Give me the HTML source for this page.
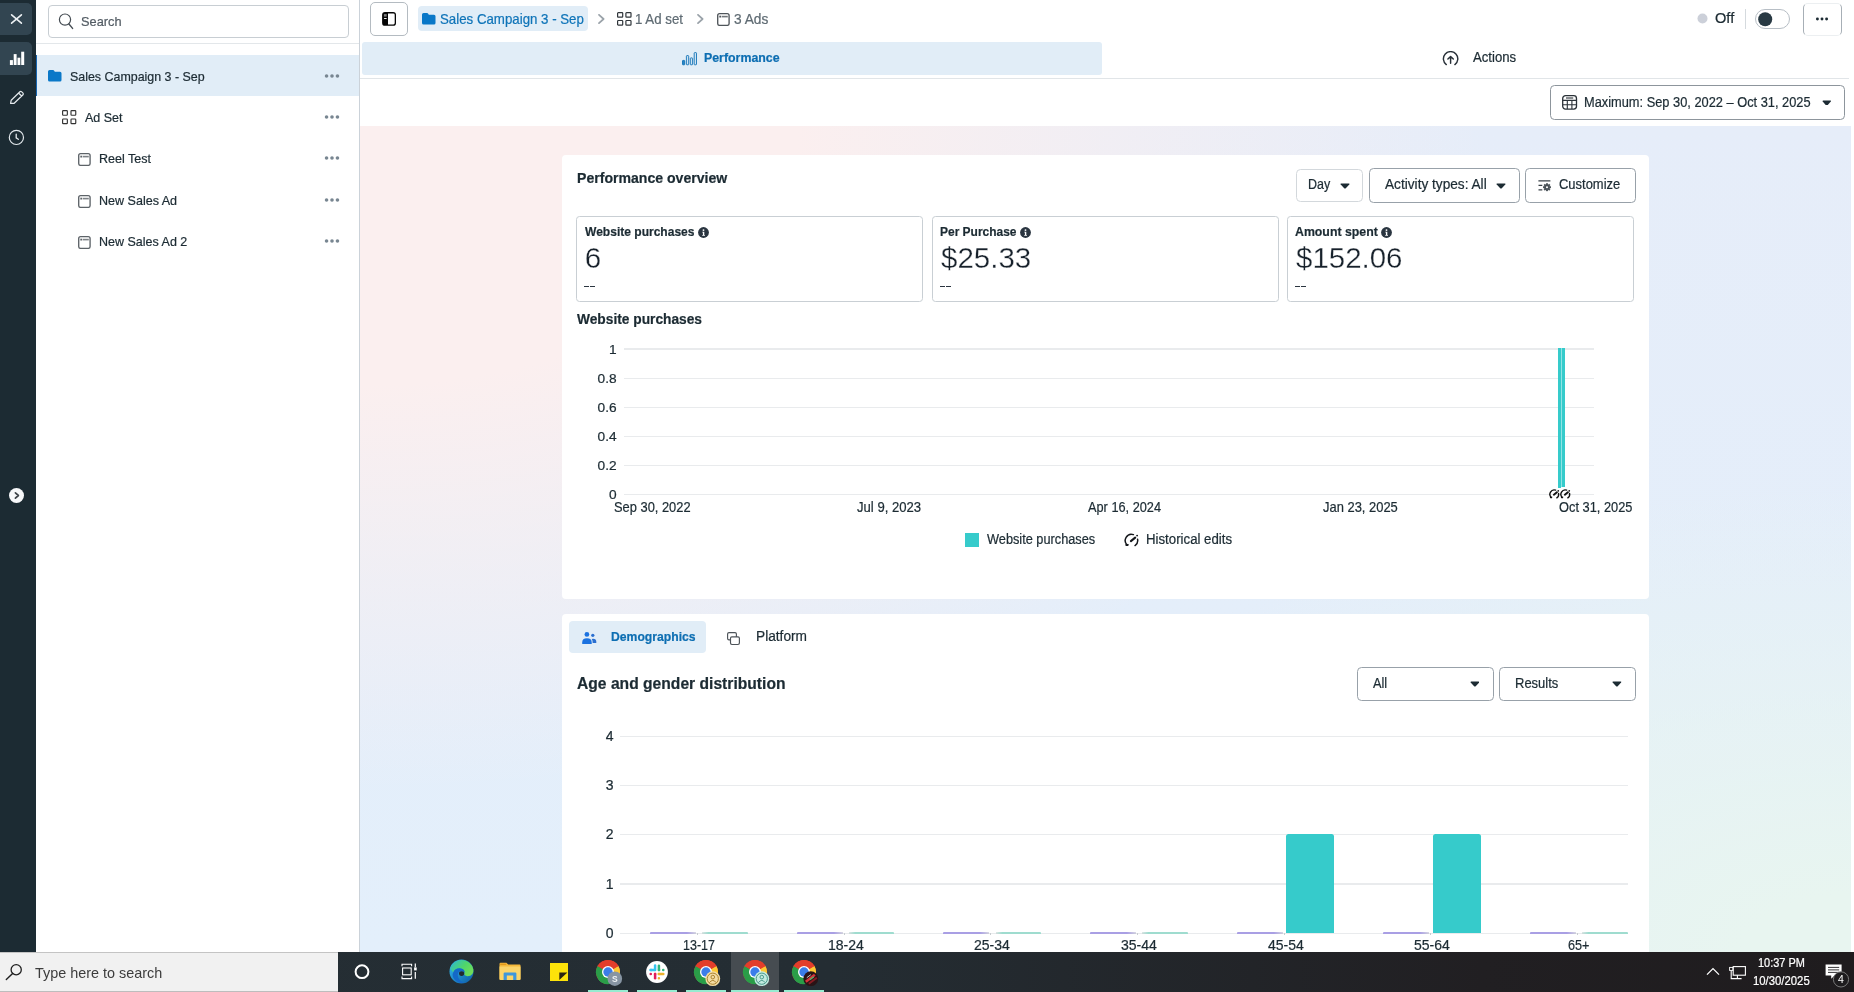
<!DOCTYPE html>
<html><head><meta charset="utf-8"><title>Ads Manager</title>
<style>
html,body{margin:0;padding:0;}
body{width:1854px;height:992px;overflow:hidden;position:relative;background:#fff;font-family:"Liberation Sans", sans-serif;color:#1c2b33;}
div,span,svg{box-sizing:border-box;}
span{-webkit-text-stroke:0.22px;}
</style></head><body>
<div id="root" style="position:absolute;left:0;top:0;width:1854px;height:992px;will-change:transform;">
<div style="position:absolute;left:360px;top:126px;width:1491px;height:826px;background:radial-gradient(ellipse 1150px 680px at 0% 0%, #fbefef 0%, #fbefef 38%, rgba(251,239,239,0.5) 66%, rgba(251,239,239,0) 98%),radial-gradient(ellipse 900px 470px at 100% 100%, #e8f5f0 0%, #e8f5f0 12%, rgba(232,245,240,0) 100%),linear-gradient(180deg,#e6edf9 0%,#e4eefa 60%,#e3effb 100%);"></div>
<div style="position:absolute;left:0px;top:0px;width:36px;height:952px;background:#1c2b33;"></div>
<div style="position:absolute;left:0px;top:3.3px;width:32.4px;height:31.5px;background:#324551;border-radius:0 5px 5px 0;"></div>
<div style="position:absolute;left:0px;top:42.4px;width:32.4px;height:32.8px;background:#324551;border-radius:0 5px 5px 0;"></div>
<svg style="position:absolute;left:10px;top:13px;" width="13" height="12" viewBox="0 0 13 12"><path d="M1.6 1.8 L11.4 10.2 M11.4 1.8 L1.6 10.2" stroke="#eef2f5" stroke-width="1.6" stroke-linecap="round"/></svg>
<svg style="position:absolute;left:9px;top:51px;" width="16" height="15" viewBox="0 0 16 15"><rect x="0.9" y="9.1" width="3" height="4.9" fill="#fff"/><rect x="4.7" y="3.1" width="2.9" height="10.9" fill="#fff"/><rect x="8.5" y="6.7" width="2.8" height="7.3" fill="#fff"/><rect x="12.2" y="0.7" width="3" height="13.3" fill="#fff"/></svg>
<svg style="position:absolute;left:9px;top:90px;" width="16" height="15" viewBox="0 0 16 15"><path d="M1.6 13.4 L2.2 10.2 L10.9 1.7 Q11.7 1 12.5 1.7 L14 3.2 Q14.7 4 14 4.8 L5.2 13.3 Z M9.6 3 L12.6 6" fill="none" stroke="#e4e9ed" stroke-width="1.2" stroke-linejoin="round"/></svg>
<svg style="position:absolute;left:8px;top:129px;" width="17" height="17" viewBox="0 0 17 17"><circle cx="8.4" cy="8.4" r="7.1" fill="none" stroke="#e4e9ed" stroke-width="1.2"/><path d="M8.2 5.2 V8.8 L10.3 10.3" fill="none" stroke="#e4e9ed" stroke-width="1.3" stroke-linecap="round"/></svg>
<svg style="position:absolute;left:7.9px;top:486.5px;" width="17" height="17" viewBox="0 0 17 17"><circle cx="8.5" cy="8.5" r="7.5" fill="#f7f8fa"/><path d="M7.4 5.8 L10.4 8.5 L7.4 11.2" fill="none" stroke="#3c4248" stroke-width="1.7" stroke-linecap="round" stroke-linejoin="round"/></svg>
<div style="position:absolute;left:36px;top:0px;width:323px;height:952px;background:#fff;"></div>
<div style="position:absolute;left:359px;top:0px;width:1px;height:952px;background:#cbd2d9;"></div>
<div style="position:absolute;left:48px;top:5px;width:301px;height:33px;border:1px solid #c8ced3;border-radius:4px;background:#fff;"></div>
<svg style="position:absolute;left:58px;top:12px;" width="16" height="18" viewBox="0 0 16 18"><circle cx="7" cy="7.6" r="5.6" fill="none" stroke="#444b52" stroke-width="1.2"/><path d="M10.9 12 L14.6 16.4" stroke="#444b52" stroke-width="1.4" stroke-linecap="round"/></svg>
<span style="position:absolute;left:80.60px;top:12.00px;line-height:20px;font-size:13.4px;font-weight:400;color:#535c64;white-space:pre;transform:scaleX(0.9543);transform-origin:0 50%;">Search</span>
<div style="position:absolute;left:36px;top:43px;width:323px;height:1px;background:#e3e7ea;"></div>
<div style="position:absolute;left:36px;top:55px;width:323px;height:41px;background:#e1edf7;"></div>
<div style="position:absolute;left:36px;top:55px;width:1.3px;height:41px;background:#1765b0;"></div>
<svg style="position:absolute;left:48.4px;top:70.4px;" width="14" height="12" viewBox="0 0 14 12"><path d="M1.6 0 H5 Q5.8 0 6.2 .7 L6.8 1.7 H12 Q13.5 1.7 13.5 3.2 V9.9 Q13.5 11.4 12 11.4 H1.6 Q0 11.4 0 9.9 V1.5 Q0 0 1.6 0Z" fill="#0a78c8"/></svg>
<span style="position:absolute;left:69.70px;top:67.01px;line-height:20px;font-size:13.4px;font-weight:400;color:#1c2b33;white-space:pre;transform:scaleX(0.9273);transform-origin:0 50%;">Sales Campaign 3 - Sep</span>
<svg style="position:absolute;left:62px;top:110.2px;" width="15" height="14.5" viewBox="0 0 15 14.5"><rect x="0.6" y="0.6" width="4.75" height="4.6" rx="0.7" fill="none" stroke="#333" stroke-width="1.15"/><rect x="0.6" y="9.0" width="4.75" height="4.6" rx="0.7" fill="none" stroke="#333" stroke-width="1.15"/><rect x="9.0" y="0.6" width="4.75" height="4.6" rx="0.7" fill="none" stroke="#333" stroke-width="1.15"/><rect x="9.0" y="9.0" width="4.75" height="4.6" rx="0.7" fill="none" stroke="#333" stroke-width="1.15"/></svg>
<span style="position:absolute;left:84.80px;top:108.01px;line-height:20px;font-size:13.4px;font-weight:400;color:#1c2b33;white-space:pre;transform:scaleX(0.9328);transform-origin:0 50%;">Ad Set</span>
<svg style="position:absolute;left:77.7px;top:152.70000000000002px;" width="13" height="13.2" viewBox="0 0 13 13.2"><rect x="0.7" y="0.7" width="11.4" height="11.7" rx="1.9" fill="none" stroke="#5d6368" stroke-width="1.35"/><rect x="2.3" y="2.7" width="2" height="1.8" fill="#5d6368"/><rect x="5" y="2.8" width="5.8" height="1.6" fill="#5d6368" opacity=".8"/></svg>
<span style="position:absolute;left:98.90px;top:149.01px;line-height:20px;font-size:13.4px;font-weight:400;color:#1c2b33;white-space:pre;transform:scaleX(0.9356);transform-origin:0 50%;">Reel Test</span>
<svg style="position:absolute;left:77.7px;top:194.70000000000002px;" width="13" height="13.2" viewBox="0 0 13 13.2"><rect x="0.7" y="0.7" width="11.4" height="11.7" rx="1.9" fill="none" stroke="#5d6368" stroke-width="1.35"/><rect x="2.3" y="2.7" width="2" height="1.8" fill="#5d6368"/><rect x="5" y="2.8" width="5.8" height="1.6" fill="#5d6368" opacity=".8"/></svg>
<span style="position:absolute;left:98.90px;top:191.01px;line-height:20px;font-size:13.4px;font-weight:400;color:#1c2b33;white-space:pre;transform:scaleX(0.9367);transform-origin:0 50%;">New Sales Ad</span>
<svg style="position:absolute;left:77.7px;top:235.9px;" width="13" height="13.2" viewBox="0 0 13 13.2"><rect x="0.7" y="0.7" width="11.4" height="11.7" rx="1.9" fill="none" stroke="#5d6368" stroke-width="1.35"/><rect x="2.3" y="2.7" width="2" height="1.8" fill="#5d6368"/><rect x="5" y="2.8" width="5.8" height="1.6" fill="#5d6368" opacity=".8"/></svg>
<span style="position:absolute;left:98.90px;top:232.00px;line-height:20px;font-size:13.4px;font-weight:400;color:#1c2b33;white-space:pre;transform:scaleX(0.9339);transform-origin:0 50%;">New Sales Ad 2</span>
<svg style="position:absolute;left:322px;top:72px;" width="20" height="8" viewBox="0 0 20 8"><circle cx="4.55" cy="4" r="1.8" fill="#788691"/><circle cx="10.0" cy="4" r="1.8" fill="#788691"/><circle cx="15.45" cy="4" r="1.8" fill="#788691"/></svg>
<svg style="position:absolute;left:322px;top:113px;" width="20" height="8" viewBox="0 0 20 8"><circle cx="4.55" cy="4" r="1.8" fill="#788691"/><circle cx="10.0" cy="4" r="1.8" fill="#788691"/><circle cx="15.45" cy="4" r="1.8" fill="#788691"/></svg>
<svg style="position:absolute;left:322px;top:154.2px;" width="20" height="8" viewBox="0 0 20 8"><circle cx="4.55" cy="4" r="1.8" fill="#788691"/><circle cx="10.0" cy="4" r="1.8" fill="#788691"/><circle cx="15.45" cy="4" r="1.8" fill="#788691"/></svg>
<svg style="position:absolute;left:322px;top:196px;" width="20" height="8" viewBox="0 0 20 8"><circle cx="4.55" cy="4" r="1.8" fill="#788691"/><circle cx="10.0" cy="4" r="1.8" fill="#788691"/><circle cx="15.45" cy="4" r="1.8" fill="#788691"/></svg>
<svg style="position:absolute;left:322px;top:237.3px;" width="20" height="8" viewBox="0 0 20 8"><circle cx="4.55" cy="4" r="1.8" fill="#788691"/><circle cx="10.0" cy="4" r="1.8" fill="#788691"/><circle cx="15.45" cy="4" r="1.8" fill="#788691"/></svg>
<div style="position:absolute;left:360px;top:0px;width:1494px;height:126px;background:#fff;"></div>
<div style="position:absolute;left:370px;top:2px;width:38px;height:34px;border:1px solid #b4bbc1;border-radius:5px;background:#fff;"></div>
<svg style="position:absolute;left:382px;top:12px;" width="15" height="14" viewBox="0 0 15 14"><rect x="0.1" y="0.1" width="13.9" height="13.7" rx="2.9" fill="#050505"/><path d="M6.0 1.4 H11.4 Q12.7 1.4 12.7 2.8 V11.1 Q12.7 12.5 11.4 12.5 H6.0Z" fill="#fff"/><rect x="1.9" y="2.1" width="2.8" height="2.5" fill="#7e7e7e"/><rect x="1.9" y="6" width="2.9" height="1" rx="0.4" fill="#f4f4f4"/></svg>
<div style="position:absolute;left:418px;top:6.3px;width:170px;height:24.4px;background:#e1edf7;border-radius:4px;"></div>
<svg style="position:absolute;left:421.7px;top:13.2px;" width="14" height="12" viewBox="0 0 14 12"><path d="M1.6 0 H5 Q5.8 0 6.2 .7 L6.8 1.7 H12 Q13.5 1.7 13.5 3.2 V9.9 Q13.5 11.4 12 11.4 H1.6 Q0 11.4 0 9.9 V1.5 Q0 0 1.6 0Z" fill="#0a78c8"/></svg>
<span style="position:absolute;left:440.00px;top:9.00px;line-height:20px;font-size:14.2px;font-weight:400;color:#0f74b8;white-space:pre;transform:scaleX(0.9356);transform-origin:0 50%;">Sales Campaign 3 - Sep</span>
<svg style="position:absolute;left:597.6px;top:13.6px;" width="7" height="10" viewBox="0 0 7 10"><path d="M1 0.8 L5.6 5 L1 9.2" fill="none" stroke="#9aa2a9" stroke-width="1.7" stroke-linecap="round" stroke-linejoin="round"/></svg>
<svg style="position:absolute;left:616.7px;top:12.1px;" width="15" height="14.5" viewBox="0 0 15 14.5"><rect x="0.6" y="0.6" width="5.1" height="4.6" rx="0.7" fill="none" stroke="#30363b" stroke-width="1.2"/><rect x="0.6" y="8.5" width="5.1" height="4.6" rx="0.7" fill="none" stroke="#30363b" stroke-width="1.2"/><rect x="8.9" y="0.6" width="5.1" height="4.6" rx="0.7" fill="none" stroke="#30363b" stroke-width="1.2"/><rect x="8.9" y="8.5" width="5.1" height="4.6" rx="0.7" fill="none" stroke="#30363b" stroke-width="1.2"/></svg>
<span style="position:absolute;left:635.00px;top:9.00px;line-height:20px;font-size:14.2px;font-weight:400;color:#5f6b73;white-space:pre;transform:scaleX(0.9360);transform-origin:0 50%;">1 Ad set</span>
<svg style="position:absolute;left:696.6px;top:13.6px;" width="7" height="10" viewBox="0 0 7 10"><path d="M1 0.8 L5.6 5 L1 9.2" fill="none" stroke="#9aa2a9" stroke-width="1.7" stroke-linecap="round" stroke-linejoin="round"/></svg>
<svg style="position:absolute;left:716.8px;top:12.9px;" width="13" height="13.2" viewBox="0 0 13 13.2"><rect x="0.7" y="0.7" width="11.4" height="11.7" rx="1.9" fill="none" stroke="#4f555a" stroke-width="1.35"/><rect x="2.3" y="2.7" width="2" height="1.8" fill="#4f555a"/><rect x="5" y="2.8" width="5.8" height="1.6" fill="#4f555a" opacity=".8"/></svg>
<span style="position:absolute;left:733.80px;top:9.00px;line-height:20px;font-size:14.2px;font-weight:400;color:#5f6b73;white-space:pre;transform:scaleX(0.9662);transform-origin:0 50%;">3 Ads</span>
<svg style="position:absolute;left:1696.5px;top:13.3px;" width="11" height="11" viewBox="0 0 11 11"><circle cx="5.5" cy="5.5" r="5" fill="#ccd0d9"/></svg>
<span style="position:absolute;left:1714.90px;top:8.00px;line-height:20px;font-size:14px;font-weight:400;color:#1c2b33;white-space:pre;transform:scaleX(1.0422);transform-origin:0 50%;">Off</span>
<div style="position:absolute;left:1745px;top:8.5px;width:1px;height:20.5px;background:#d5dade;"></div>
<div style="position:absolute;left:1755px;top:9px;width:34.5px;height:19.5px;border:1px solid #b7bec5;border-radius:10px;background:#fff;"></div>
<svg style="position:absolute;left:1757.8px;top:11.7px;" width="15" height="15" viewBox="0 0 15 15"><circle cx="7.2" cy="7.2" r="7" fill="#283943"/></svg>
<div style="position:absolute;left:1803px;top:2.5px;width:38.5px;height:33px;border-left:1px solid #a7afb6;border-right:1px solid #a7afb6;border-top:1px solid #eceff1;border-bottom:1px solid #eceff1;border-radius:5px;"></div>
<svg style="position:absolute;left:1812px;top:14.8px;" width="20" height="8" viewBox="0 0 20 8"><circle cx="5.4" cy="4" r="1.45" fill="#1c2b33"/><circle cx="10.0" cy="4" r="1.45" fill="#1c2b33"/><circle cx="14.6" cy="4" r="1.45" fill="#1c2b33"/></svg>
<div style="position:absolute;left:361.6px;top:42.2px;width:740px;height:32.7px;background:#e1edf7;border-radius:3px;"></div>
<svg style="position:absolute;left:682px;top:51.5px;" width="15.5" height="14" viewBox="0 0 15.5 14"><rect x="0.5" y="8.4" width="2.2" height="4.4" rx="0.5" fill="#2a86c5" stroke="#1273b7" stroke-width="0.9"/><rect x="4.4" y="3.6" width="2.3" height="9.2" rx="0.6" fill="#cfe3f3" stroke="#1273b7" stroke-width="0.9"/><rect x="8.3" y="5.9" width="2.3" height="6.9" rx="0.6" fill="#cfe3f3" stroke="#1273b7" stroke-width="0.9"/><rect x="12.2" y="0.6" width="2.3" height="12.2" rx="0.6" fill="#cfe3f3" stroke="#1273b7" stroke-width="0.9"/></svg>
<span style="position:absolute;left:704.30px;top:48.01px;line-height:20px;font-size:13.4px;font-weight:700;color:#0d6eb2;white-space:pre;transform:scaleX(0.9234);transform-origin:0 50%;">Performance</span>
<svg style="position:absolute;left:1442px;top:51.2px;" width="18" height="16" viewBox="0 0 18 16"><path d="M4.3 13.6 A7.2 7.2 0 1 1 12.9 13.6" fill="none" stroke="#283038" stroke-width="1.45" stroke-linecap="round"/><path d="M8.6 12.3 V5.6 M5.9 8.1 L8.6 5.4 L11.3 8.1" fill="none" stroke="#283038" stroke-width="1.45" stroke-linecap="round" stroke-linejoin="round"/></svg>
<span style="position:absolute;left:1473.00px;top:47.01px;line-height:20px;font-size:14px;font-weight:400;color:#1c2b33;white-space:pre;transform:scaleX(0.9407);transform-origin:0 50%;">Actions</span>
<div style="position:absolute;left:360px;top:77.9px;width:1489px;height:1px;background:#e1e5e8;"></div>
<div style="position:absolute;left:1550px;top:85px;width:295px;height:35px;border:1px solid #8d959c;border-radius:4.5px;background:#fff;"></div>
<svg style="position:absolute;left:1562px;top:95px;" width="15.5" height="15" viewBox="0 0 15.5 15"><rect x="0.7" y="0.7" width="13.8" height="13.4" rx="2.8" fill="none" stroke="#2b3238" stroke-width="1.3"/><path d="M0.7 5.4 H14.5 M0.7 9.7 H14.5 M5.3 5.4 V14.1 M9.9 5.4 V14.1" stroke="#2b3238" stroke-width="1.1" fill="none"/><path d="M4 3 H11.2" stroke="#2b3238" stroke-width="1.1"/></svg>
<span style="position:absolute;left:1584.40px;top:92.01px;line-height:20px;font-size:14px;font-weight:400;color:#1c2b33;white-space:pre;transform:scaleX(0.9156);transform-origin:0 50%;">Maximum: Sep 30, 2022 – Oct 31, 2025</span>
<svg style="position:absolute;left:1821.5px;top:99.7px;" width="9.5" height="5.8" viewBox="0 0 9.5 5.8"><path d="M1.2 0.6 H8.3 Q9.5 0.6 8.8 1.6 L5.55 5.3 Q4.75 5.8999999999999995 3.95 5.3 L0.7 1.6 Q0 0.6 1.2 0.6Z" fill="#1c2b33"/></svg>
<div style="position:absolute;left:562px;top:154.6px;width:1087px;height:444px;background:#fff;border-radius:4px;"></div>
<span style="position:absolute;left:577.20px;top:168.01px;line-height:20px;font-size:14px;font-weight:700;color:#1c2b33;white-space:pre;transform:scaleX(1.0053);transform-origin:0 50%;">Performance overview</span>
<div style="position:absolute;left:1296.2px;top:169.1px;width:66.6px;height:32.7px;border:1px solid #d3d8dc;border-radius:4.5px;background:#fff;"></div>
<span style="position:absolute;left:1308.00px;top:174.01px;line-height:20px;font-size:14px;font-weight:400;color:#1c2b33;white-space:pre;transform:scaleX(0.8913);transform-origin:0 50%;">Day</span>
<svg style="position:absolute;left:1339.6px;top:183px;" width="10" height="5.8" viewBox="0 0 10 5.8"><path d="M1.2 0.6 H8.8 Q10 0.6 9.3 1.6 L5.8 5.3 Q5.0 5.8999999999999995 4.2 5.3 L0.7 1.6 Q0 0.6 1.2 0.6Z" fill="#1c2b33"/></svg>
<div style="position:absolute;left:1369.2px;top:168.2px;width:150.5px;height:34.5px;border:1px solid #98a1a9;border-radius:4.5px;background:#fff;"></div>
<span style="position:absolute;left:1384.80px;top:174.01px;line-height:20px;font-size:14px;font-weight:400;color:#1c2b33;white-space:pre;transform:scaleX(0.9754);transform-origin:0 50%;">Activity types: All</span>
<svg style="position:absolute;left:1495.8px;top:183px;" width="10" height="5.8" viewBox="0 0 10 5.8"><path d="M1.2 0.6 H8.8 Q10 0.6 9.3 1.6 L5.8 5.3 Q5.0 5.8999999999999995 4.2 5.3 L0.7 1.6 Q0 0.6 1.2 0.6Z" fill="#1c2b33"/></svg>
<div style="position:absolute;left:1525px;top:168.2px;width:110.6px;height:34.5px;border:1px solid #98a1a9;border-radius:4.5px;background:#fff;"></div>
<svg style="position:absolute;left:1537.5px;top:179.0px;" width="15" height="13" viewBox="0 0 15 13"><path d="M0.4 1.9 H12.4 M0.5 6.4 H4.3 M0.5 10.9 H4.3" stroke="#3a4248" stroke-width="1.2" fill="none"/><g transform="translate(9.0,8.2)"><circle r="2.75" fill="#4a5258"/><rect x="-0.95" y="-3.95" width="1.9" height="1.9" fill="#4a5258" transform="rotate(0)"/><rect x="-0.95" y="-3.95" width="1.9" height="1.9" fill="#4a5258" transform="rotate(45)"/><rect x="-0.95" y="-3.95" width="1.9" height="1.9" fill="#4a5258" transform="rotate(90)"/><rect x="-0.95" y="-3.95" width="1.9" height="1.9" fill="#4a5258" transform="rotate(135)"/><rect x="-0.95" y="-3.95" width="1.9" height="1.9" fill="#4a5258" transform="rotate(180)"/><rect x="-0.95" y="-3.95" width="1.9" height="1.9" fill="#4a5258" transform="rotate(225)"/><rect x="-0.95" y="-3.95" width="1.9" height="1.9" fill="#4a5258" transform="rotate(270)"/><rect x="-0.95" y="-3.95" width="1.9" height="1.9" fill="#4a5258" transform="rotate(315)"/><circle r="1.05" fill="#fff"/></g></svg>
<span style="position:absolute;left:1558.90px;top:174.01px;line-height:20px;font-size:14px;font-weight:400;color:#1c2b33;white-space:pre;transform:scaleX(0.9253);transform-origin:0 50%;">Customize</span>
<div style="position:absolute;left:576.3px;top:216.3px;width:347px;height:85.6px;border:1px solid #c9cfd4;border-radius:3.5px;background:#fff;"></div><span style="position:absolute;left:584.50px;top:222.01px;line-height:20px;font-size:13.6px;font-weight:700;color:#1c2b33;white-space:pre;transform:scaleX(0.8855);transform-origin:0 50%;">Website purchases</span><svg style="position:absolute;left:698.0px;top:226.85px;" width="11" height="11" viewBox="0 0 11 11"><circle cx="5.5" cy="5.5" r="5.4" fill="#2a3540"/><circle cx="5.5" cy="3.1" r="0.95" fill="#fff"/><path d="M4.3 4.8 H6.3 V8 H7 V8.8 H4.2 V8 H4.9 V5.6 H4.3Z" fill="#fff"/></svg><span style="position:absolute;left:584.70px;top:248.01px;line-height:20px;font-size:29.6px;font-weight:400;color:#17212b;white-space:pre;-webkit-text-stroke:0.3px #fff;">6</span><div style="position:absolute;left:583.5999999999999px;top:285.8px;width:5.1px;height:1.2px;background:#2b3540;"></div><div style="position:absolute;left:589.5999999999999px;top:285.8px;width:5.1px;height:1.2px;background:#2b3540;"></div>
<div style="position:absolute;left:932.2px;top:216.3px;width:347px;height:85.6px;border:1px solid #c9cfd4;border-radius:3.5px;background:#fff;"></div><span style="position:absolute;left:940.40px;top:222.01px;line-height:20px;font-size:13.6px;font-weight:700;color:#1c2b33;white-space:pre;transform:scaleX(0.8800);transform-origin:0 50%;">Per Purchase</span><svg style="position:absolute;left:1019.9000000000001px;top:226.85px;" width="11" height="11" viewBox="0 0 11 11"><circle cx="5.5" cy="5.5" r="5.4" fill="#2a3540"/><circle cx="5.5" cy="3.1" r="0.95" fill="#fff"/><path d="M4.3 4.8 H6.3 V8 H7 V8.8 H4.2 V8 H4.9 V5.6 H4.3Z" fill="#fff"/></svg><span style="position:absolute;left:940.60px;top:248.01px;line-height:20px;font-size:29.6px;font-weight:400;color:#17212b;white-space:pre;transform:scaleX(0.9965);transform-origin:0 50%;-webkit-text-stroke:0.3px #fff;">$25.33</span><div style="position:absolute;left:939.5px;top:285.8px;width:5.1px;height:1.2px;background:#2b3540;"></div><div style="position:absolute;left:945.5px;top:285.8px;width:5.1px;height:1.2px;background:#2b3540;"></div>
<div style="position:absolute;left:1287.2px;top:216.3px;width:347.3px;height:85.6px;border:1px solid #c9cfd4;border-radius:3.5px;background:#fff;"></div><span style="position:absolute;left:1295.40px;top:222.01px;line-height:20px;font-size:13.6px;font-weight:700;color:#1c2b33;white-space:pre;transform:scaleX(0.9062);transform-origin:0 50%;">Amount spent</span><svg style="position:absolute;left:1380.9px;top:226.85px;" width="11" height="11" viewBox="0 0 11 11"><circle cx="5.5" cy="5.5" r="5.4" fill="#2a3540"/><circle cx="5.5" cy="3.1" r="0.95" fill="#fff"/><path d="M4.3 4.8 H6.3 V8 H7 V8.8 H4.2 V8 H4.9 V5.6 H4.3Z" fill="#fff"/></svg><span style="position:absolute;left:1295.60px;top:248.01px;line-height:20px;font-size:29.6px;font-weight:400;color:#17212b;white-space:pre;transform:scaleX(0.9955);transform-origin:0 50%;-webkit-text-stroke:0.3px #fff;">$152.06</span><div style="position:absolute;left:1294.5px;top:285.8px;width:5.1px;height:1.2px;background:#2b3540;"></div><div style="position:absolute;left:1300.5px;top:285.8px;width:5.1px;height:1.2px;background:#2b3540;"></div>
<span style="position:absolute;left:577.40px;top:309.01px;line-height:20px;font-size:14.5px;font-weight:700;color:#1c2b33;white-space:pre;transform:scaleX(0.9476);transform-origin:0 50%;">Website purchases</span>
<div style="position:absolute;left:624.2px;top:348.4px;width:970.3px;height:1.3px;background:#e9ebed;"></div>
<span style="position:absolute;left:608.98px;top:340.01px;line-height:20px;font-size:13.7px;font-weight:400;color:#1c2b33;white-space:pre;">1</span>
<div style="position:absolute;left:624.2px;top:377.5px;width:970.3px;height:1.3px;background:#e9ebed;"></div>
<span style="position:absolute;left:597.57px;top:369.02px;line-height:20px;font-size:13.7px;font-weight:400;color:#1c2b33;white-space:pre;">0.8</span>
<div style="position:absolute;left:624.2px;top:406.59999999999997px;width:970.3px;height:1.3px;background:#e9ebed;"></div>
<span style="position:absolute;left:597.57px;top:398.01px;line-height:20px;font-size:13.7px;font-weight:400;color:#1c2b33;white-space:pre;">0.6</span>
<div style="position:absolute;left:624.2px;top:435.7px;width:970.3px;height:1.3px;background:#e9ebed;"></div>
<span style="position:absolute;left:597.57px;top:427.01px;line-height:20px;font-size:13.7px;font-weight:400;color:#1c2b33;white-space:pre;">0.4</span>
<div style="position:absolute;left:624.2px;top:464.79999999999995px;width:970.3px;height:1.3px;background:#e9ebed;"></div>
<span style="position:absolute;left:597.57px;top:456.00px;line-height:20px;font-size:13.7px;font-weight:400;color:#1c2b33;white-space:pre;">0.2</span>
<div style="position:absolute;left:624.2px;top:493.79999999999995px;width:970.3px;height:1.3px;background:#e9ebed;"></div>
<span style="position:absolute;left:608.98px;top:485.00px;line-height:20px;font-size:13.7px;font-weight:400;color:#1c2b33;white-space:pre;">0</span>
<div style="position:absolute;left:1557.5px;top:348.3px;width:3.6px;height:139.8px;background:#36cbcb;"></div>
<div style="position:absolute;left:1561.8px;top:348.3px;width:3.3px;height:138.6px;background:#36cbcb;"></div>
<div style="position:absolute;left:1561.0px;top:348.3px;width:0.9px;height:138.6px;background:#8fe4e4;"></div>
<span style="position:absolute;left:614.40px;top:497.00px;line-height:20px;font-size:14.3px;font-weight:400;color:#1c2b33;white-space:pre;transform:scaleX(0.9005);transform-origin:0 50%;">Sep 30, 2022</span>
<span style="position:absolute;left:856.65px;top:497.00px;line-height:20px;font-size:14.3px;font-weight:400;color:#1c2b33;white-space:pre;transform:scaleX(0.9163);transform-origin:0 50%;">Jul 9, 2023</span>
<span style="position:absolute;left:1088.00px;top:497.00px;line-height:20px;font-size:14.3px;font-weight:400;color:#1c2b33;white-space:pre;transform:scaleX(0.8916);transform-origin:0 50%;">Apr 16, 2024</span>
<span style="position:absolute;left:1322.90px;top:497.00px;line-height:20px;font-size:14.3px;font-weight:400;color:#1c2b33;white-space:pre;transform:scaleX(0.9046);transform-origin:0 50%;">Jan 23, 2025</span>
<span style="position:absolute;left:1558.50px;top:497.00px;line-height:20px;font-size:14.3px;font-weight:400;color:#1c2b33;white-space:pre;transform:scaleX(0.8965);transform-origin:0 50%;">Oct 31, 2025</span>
<svg style="position:absolute;left:1549.4px;top:489.2px;" width="10.6" height="10.6" viewBox="0 0 15 15"><path d="M9.42 1.60 A6.2 6.2 0 0 0 3.35 12.11" fill="none" stroke="#111" stroke-width="1.9500000000000002" stroke-linecap="round"/><path d="M13.56 6.21 A6.2 6.2 0 0 1 11.06 12.58" fill="none" stroke="#111" stroke-width="1.9500000000000002" stroke-linecap="round"/><path d="M1.14 11.21 L4.74 10.91 L4.24 12.91 L1.74 13.01Z" fill="#111"/><path d="M6.9 8.1 L11.2 4.6" stroke="#111" stroke-width="2.7300000000000004" stroke-linecap="round"/><circle cx="13.1" cy="2.6" r="1.2349999999999999" fill="#111"/></svg>
<svg style="position:absolute;left:1560px;top:489.2px;" width="10.6" height="10.6" viewBox="0 0 15 15"><path d="M9.42 1.60 A6.2 6.2 0 0 0 3.35 12.11" fill="none" stroke="#111" stroke-width="1.9500000000000002" stroke-linecap="round"/><path d="M13.56 6.21 A6.2 6.2 0 0 1 11.06 12.58" fill="none" stroke="#111" stroke-width="1.9500000000000002" stroke-linecap="round"/><path d="M1.14 11.21 L4.74 10.91 L4.24 12.91 L1.74 13.01Z" fill="#111"/><path d="M6.9 8.1 L11.2 4.6" stroke="#111" stroke-width="2.7300000000000004" stroke-linecap="round"/><circle cx="13.1" cy="2.6" r="1.2349999999999999" fill="#111"/></svg>
<div style="position:absolute;left:965.1px;top:533.2px;width:13.8px;height:13.7px;background:#36cbcb;"></div>
<span style="position:absolute;left:987.20px;top:529.01px;line-height:20px;font-size:14px;font-weight:400;color:#1c2b33;white-space:pre;transform:scaleX(0.9107);transform-origin:0 50%;">Website purchases</span>
<svg style="position:absolute;left:1123.5px;top:532.6px;" width="15" height="15" viewBox="0 0 15 15"><path d="M9.42 1.60 A6.2 6.2 0 0 0 3.35 12.11" fill="none" stroke="#14171b" stroke-width="1.5" stroke-linecap="round"/><path d="M13.56 6.21 A6.2 6.2 0 0 1 11.06 12.58" fill="none" stroke="#14171b" stroke-width="1.5" stroke-linecap="round"/><path d="M1.14 11.21 L4.74 10.91 L4.24 12.91 L1.74 13.01Z" fill="#14171b"/><path d="M6.9 8.1 L11.2 4.6" stroke="#14171b" stroke-width="2.1" stroke-linecap="round"/><circle cx="13.1" cy="2.6" r="0.95" fill="#14171b"/></svg>
<span style="position:absolute;left:1146.10px;top:529.01px;line-height:20px;font-size:14px;font-weight:400;color:#1c2b33;white-space:pre;transform:scaleX(0.9458);transform-origin:0 50%;">Historical edits</span>
<div style="position:absolute;left:562px;top:614px;width:1087px;height:338px;background:#fff;border-radius:4px 4px 0 0;"></div>
<div style="position:absolute;left:569.4px;top:621.3px;width:136.4px;height:31.3px;background:#e1edf7;border-radius:4px;"></div>
<svg style="position:absolute;left:581.8px;top:632px;" width="15" height="12.5" viewBox="0 0 15 12.5"><circle cx="4.9" cy="2.4" r="2.35" fill="#1b72e0"/><path d="M0.2 12 V10.4 Q0.2 6.3 4.95 6.3 Q9.7 6.3 9.7 10.4 V12Z" fill="#1b72e0"/><circle cx="10.8" cy="3.3" r="1.65" fill="#2a6fd0"/><path d="M10.6 11 V9.9 Q10.6 8 9.7 6.9 Q14.3 6.1 14.3 9.8 V11Z" fill="#2a6fd0"/></svg>
<span style="position:absolute;left:611.40px;top:627.00px;line-height:20px;font-size:13.6px;font-weight:700;color:#0d6eb2;white-space:pre;transform:scaleX(0.8958);transform-origin:0 50%;">Demographics</span>
<svg style="position:absolute;left:726.8px;top:632px;" width="14" height="13.5" viewBox="0 0 14 13.5"><rect x="0.6" y="0.6" width="8.8" height="7.2" rx="1.4" fill="#fff" stroke="#4d5359" stroke-width="1.15"/><rect x="3.5" y="4.9" width="8.9" height="7.6" rx="1.4" fill="#fff" stroke="#4d5359" stroke-width="1.15"/></svg>
<span style="position:absolute;left:756.40px;top:626.00px;line-height:20px;font-size:14px;font-weight:400;color:#1c2b33;white-space:pre;transform:scaleX(0.9784);transform-origin:0 50%;">Platform</span>
<span style="position:absolute;left:576.90px;top:673.01px;line-height:20px;font-size:16.2px;font-weight:700;color:#1c2b33;white-space:pre;transform:scaleX(0.9660);transform-origin:0 50%;">Age and gender distribution</span>
<div style="position:absolute;left:1357.2px;top:667.4px;width:136.4px;height:33.3px;border:1px solid #98a1a9;border-radius:4.5px;background:#fff;"></div>
<span style="position:absolute;left:1372.80px;top:673.00px;line-height:20px;font-size:14px;font-weight:400;color:#1c2b33;white-space:pre;transform:scaleX(0.9124);transform-origin:0 50%;">All</span>
<svg style="position:absolute;left:1469.7px;top:681px;" width="9.8" height="5.8" viewBox="0 0 9.8 5.8"><path d="M1.2 0.6 H8.600000000000001 Q9.8 0.6 9.100000000000001 1.6 L5.7 5.3 Q4.9 5.8999999999999995 4.1000000000000005 5.3 L0.7 1.6 Q0 0.6 1.2 0.6Z" fill="#1c2b33"/></svg>
<div style="position:absolute;left:1499.1px;top:667.4px;width:136.7px;height:33.3px;border:1px solid #98a1a9;border-radius:4.5px;background:#fff;"></div>
<span style="position:absolute;left:1514.70px;top:673.00px;line-height:20px;font-size:14px;font-weight:400;color:#1c2b33;white-space:pre;transform:scaleX(0.9274);transform-origin:0 50%;">Results</span>
<svg style="position:absolute;left:1612.1px;top:681px;" width="9.8" height="5.8" viewBox="0 0 9.8 5.8"><path d="M1.2 0.6 H8.600000000000001 Q9.8 0.6 9.100000000000001 1.6 L5.7 5.3 Q4.9 5.8999999999999995 4.1000000000000005 5.3 L0.7 1.6 Q0 0.6 1.2 0.6Z" fill="#1c2b33"/></svg>
<div style="position:absolute;left:620.3px;top:735.6px;width:1007.6px;height:1.2px;background:#e9ebed;"></div>
<span style="position:absolute;left:605.80px;top:726.00px;line-height:20px;font-size:14px;font-weight:400;color:#1c2b33;white-space:pre;">4</span>
<div style="position:absolute;left:620.3px;top:784.9px;width:1007.6px;height:1.2px;background:#e9ebed;"></div>
<span style="position:absolute;left:605.80px;top:775.01px;line-height:20px;font-size:14px;font-weight:400;color:#1c2b33;white-space:pre;">3</span>
<div style="position:absolute;left:620.3px;top:834.1px;width:1007.6px;height:1.2px;background:#e9ebed;"></div>
<span style="position:absolute;left:605.80px;top:824.00px;line-height:20px;font-size:14px;font-weight:400;color:#1c2b33;white-space:pre;">2</span>
<div style="position:absolute;left:620.3px;top:883.4px;width:1007.6px;height:1.2px;background:#e9ebed;"></div>
<span style="position:absolute;left:605.80px;top:874.01px;line-height:20px;font-size:14px;font-weight:400;color:#1c2b33;white-space:pre;">1</span>
<div style="position:absolute;left:620.3px;top:932.6999999999999px;width:1007.6px;height:1.2px;background:#e9ebed;"></div>
<span style="position:absolute;left:605.80px;top:923.01px;line-height:20px;font-size:14px;font-weight:400;color:#1c2b33;white-space:pre;">0</span>
<div style="position:absolute;left:649.8000000000001px;top:931.9px;width:46px;height:1.9px;background:linear-gradient(90deg,#a99fe4 0%,#a99fe4 80%,rgba(180,178,200,0.5) 100%);border-radius:1px 0 0 0;"></div>
<div style="position:absolute;left:696.9000000000001px;top:933.3px;width:1px;height:2.2px;background:#c9cdd1;"></div>
<div style="position:absolute;left:702.2px;top:931.9px;width:45.6px;height:1.9px;background:linear-gradient(90deg,rgba(190,205,203,0.5) 0%,#9fdccf 14%,#9fdccf 100%);border-radius:0 1px 0 0;"></div>
<span style="position:absolute;left:682.83px;top:935.00px;line-height:20px;font-size:14.2px;font-weight:400;color:#1c2b33;white-space:pre;transform:scaleX(0.8800);transform-origin:0 50%;">13-17</span>
<div style="position:absolute;left:796.5000000000001px;top:931.9px;width:46px;height:1.9px;background:linear-gradient(90deg,#a99fe4 0%,#a99fe4 80%,rgba(180,178,200,0.5) 100%);border-radius:1px 0 0 0;"></div>
<div style="position:absolute;left:843.6000000000001px;top:933.3px;width:1px;height:2.2px;background:#c9cdd1;"></div>
<div style="position:absolute;left:848.9000000000001px;top:931.9px;width:45.6px;height:1.9px;background:linear-gradient(90deg,rgba(190,205,203,0.5) 0%,#9fdccf 14%,#9fdccf 100%);border-radius:0 1px 0 0;"></div>
<span style="position:absolute;left:827.55px;top:935.00px;line-height:20px;font-size:14.2px;font-weight:400;color:#1c2b33;white-space:pre;transform:scaleX(0.9891);transform-origin:0 50%;">18-24</span>
<div style="position:absolute;left:943.2px;top:931.9px;width:46px;height:1.9px;background:linear-gradient(90deg,#a99fe4 0%,#a99fe4 80%,rgba(180,178,200,0.5) 100%);border-radius:1px 0 0 0;"></div>
<div style="position:absolute;left:990.3000000000001px;top:933.3px;width:1px;height:2.2px;background:#c9cdd1;"></div>
<div style="position:absolute;left:995.6px;top:931.9px;width:45.6px;height:1.9px;background:linear-gradient(90deg,rgba(190,205,203,0.5) 0%,#9fdccf 14%,#9fdccf 100%);border-radius:0 1px 0 0;"></div>
<span style="position:absolute;left:974.25px;top:935.00px;line-height:20px;font-size:14.2px;font-weight:400;color:#1c2b33;white-space:pre;transform:scaleX(0.9891);transform-origin:0 50%;">25-34</span>
<div style="position:absolute;left:1089.8999999999999px;top:931.9px;width:46px;height:1.9px;background:linear-gradient(90deg,#a99fe4 0%,#a99fe4 80%,rgba(180,178,200,0.5) 100%);border-radius:1px 0 0 0;"></div>
<div style="position:absolute;left:1137.0px;top:933.3px;width:1px;height:2.2px;background:#c9cdd1;"></div>
<div style="position:absolute;left:1142.3px;top:931.9px;width:45.6px;height:1.9px;background:linear-gradient(90deg,rgba(190,205,203,0.5) 0%,#9fdccf 14%,#9fdccf 100%);border-radius:0 1px 0 0;"></div>
<span style="position:absolute;left:1120.95px;top:935.00px;line-height:20px;font-size:14.2px;font-weight:400;color:#1c2b33;white-space:pre;transform:scaleX(0.9891);transform-origin:0 50%;">35-44</span>
<div style="position:absolute;left:1236.6px;top:931.9px;width:46px;height:1.9px;background:linear-gradient(90deg,#a99fe4 0%,#a99fe4 80%,rgba(180,178,200,0.5) 100%);border-radius:1px 0 0 0;"></div>
<div style="position:absolute;left:1283.7px;top:933.3px;width:1px;height:2.2px;background:#c9cdd1;"></div>
<div style="position:absolute;left:1286.3px;top:834.4px;width:48.1px;height:99px;background:#36cbcb;border-radius:2.5px 2.5px 0 0;"></div>
<span style="position:absolute;left:1267.65px;top:935.00px;line-height:20px;font-size:14.2px;font-weight:400;color:#1c2b33;white-space:pre;transform:scaleX(0.9891);transform-origin:0 50%;">45-54</span>
<div style="position:absolute;left:1383.3px;top:931.9px;width:46px;height:1.9px;background:linear-gradient(90deg,#a99fe4 0%,#a99fe4 80%,rgba(180,178,200,0.5) 100%);border-radius:1px 0 0 0;"></div>
<div style="position:absolute;left:1430.4px;top:933.3px;width:1px;height:2.2px;background:#c9cdd1;"></div>
<div style="position:absolute;left:1433.0px;top:834.4px;width:48.1px;height:99px;background:#36cbcb;border-radius:2.5px 2.5px 0 0;"></div>
<span style="position:absolute;left:1414.35px;top:935.00px;line-height:20px;font-size:14.2px;font-weight:400;color:#1c2b33;white-space:pre;transform:scaleX(0.9891);transform-origin:0 50%;">55-64</span>
<div style="position:absolute;left:1530.0px;top:931.9px;width:46px;height:1.9px;background:linear-gradient(90deg,#a99fe4 0%,#a99fe4 80%,rgba(180,178,200,0.5) 100%);border-radius:1px 0 0 0;"></div>
<div style="position:absolute;left:1577.1000000000001px;top:933.3px;width:1px;height:2.2px;background:#c9cdd1;"></div>
<div style="position:absolute;left:1582.4px;top:931.9px;width:45.6px;height:1.9px;background:linear-gradient(90deg,rgba(190,205,203,0.5) 0%,#9fdccf 14%,#9fdccf 100%);border-radius:0 1px 0 0;"></div>
<span style="position:absolute;left:1568.25px;top:935.00px;line-height:20px;font-size:14.2px;font-weight:400;color:#1c2b33;white-space:pre;transform:scaleX(0.8929);transform-origin:0 50%;">65+</span>
<div style="position:absolute;left:0px;top:952px;width:1854px;height:40px;background:linear-gradient(90deg,#252e34 0%,#242d33 45%,#211f22 80%,#1f1c1e 100%);"></div>
<div style="position:absolute;left:0px;top:952px;width:337.6px;height:40px;background:#f1f1f1;border-top:1px solid #c4c4c4;border-bottom:1.5px solid #bdbdbd;"></div>
<svg style="position:absolute;left:4px;top:962px;" width="20" height="20" viewBox="0 0 20 20"><circle cx="12.2" cy="7.7" r="5.1" fill="none" stroke="#1f1f1f" stroke-width="1.3"/><path d="M8.6 11.4 L2.3 17.6" stroke="#1f1f1f" stroke-width="1.4" stroke-linecap="round"/></svg>
<span style="position:absolute;left:34.50px;top:963.01px;line-height:20px;font-size:15px;font-weight:400;color:#3c3c3c;white-space:pre;transform:scaleX(0.9602);transform-origin:0 50%;-webkit-text-stroke:0;">Type here to search</span>
<svg style="position:absolute;left:353px;top:963px;" width="18" height="18" viewBox="0 0 18 18"><circle cx="9" cy="8.7" r="6.4" fill="none" stroke="#fff" stroke-width="2"/></svg>
<svg style="position:absolute;left:401px;top:963px;" width="18" height="17" viewBox="0 0 18 17"><path d="M1 3.2 V1.2 H10.6 V3.2 M1 13.6 V15.6 H10.6 V13.6" fill="none" stroke="#fff" stroke-width="1.1"/><rect x="1.6" y="5" width="8.6" height="6.8" fill="none" stroke="#fff" stroke-width="1.1"/><path d="M14.3 0.6 V4.2 M14.3 9 V15.8" stroke="#fff" stroke-width="1.2"/><rect x="13.1" y="4.4" width="2.6" height="3" fill="#fff"/></svg>
<svg style="position:absolute;left:448.5px;top:959px;" width="25" height="25" viewBox="0 0 25 25"><defs><linearGradient id="eg1" x1="0" y1="0" x2="1" y2="1"><stop offset="0" stop-color="#35c1f1"/><stop offset="1" stop-color="#0c59a4"/></linearGradient><linearGradient id="eg2" x1="0" y1="0" x2="1" y2="0.6"><stop offset="0" stop-color="#2bb6d8"/><stop offset="0.6" stop-color="#4fd66a"/><stop offset="1" stop-color="#6fdc5a"/></linearGradient></defs><circle cx="12.5" cy="12.5" r="12" fill="url(#eg1)"/><path d="M1.2 9.5 A12 12 0 0 1 24.4 10.5 Q25 17 18.5 17.2 Q14.5 17 15.4 13.6 Q16 10.4 12 9.4 Q6.5 8.6 4.2 13.4 Q2.2 11 1.2 9.5Z" fill="url(#eg2)"/><path d="M4.2 13.4 Q6.3 8.6 12 9.4 Q16 10.4 15.4 13.6 Q14.4 12 12.3 12 Q8.6 12.3 8.8 16.4 Q9.4 21.6 15.5 23.6 Q8 25.2 4.2 18.6 Q3 15.6 4.2 13.4Z" fill="#1469c8"/><ellipse cx="12.6" cy="14.6" rx="2.6" ry="2.4" fill="#212a30"/></svg>
<svg style="position:absolute;left:498.5px;top:962px;" width="22" height="19" viewBox="0 0 22 19"><path d="M0.5 2 Q0.5 0.8 1.6 0.8 H7.4 L9.2 2.6 H20.6 Q21.5 2.6 21.5 3.6 V17.6 H0.5Z" fill="#f6b93b"/><rect x="1.2" y="1.6" width="6" height="1.4" fill="#e39a1c"/><path d="M0.5 4.6 H21.5 V17 Q21.5 18 20.5 18 H1.5 Q0.5 18 0.5 17Z" fill="#fcd56a"/><path d="M4.6 18 V11.6 Q4.6 10.4 5.8 10.4 H16.2 Q17.4 10.4 17.4 11.6 V18 H14.2 V13.6 H7.8 V18Z" fill="#3f97dc"/></svg>
<svg style="position:absolute;left:549.9px;top:962.8px;" width="18.4" height="18.5" viewBox="0 0 18.4 18.5"><rect width="18.4" height="18.5" fill="#fde30a"/><path d="M9.3 9.5 H17.4 L9.3 17Z" fill="#2a2410"/></svg>
<div style="position:absolute;left:731px;top:952px;width:48px;height:40px;background:#464c51;"></div>
<svg style="position:absolute;left:594.6px;top:958.6px;" width="28" height="28" viewBox="0 0 28 28"><g transform="translate(13,13)"><circle r="12" fill="#e33e2b"/><path d="M0 0 L-10.39 6.00 A12 12 0 0 0 0.00 12.00 Z" fill="#2da44e"/><path d="M0 0 L-10.39 6.00 A12 12 0 0 0 0.00 12.00 Z" fill="#2da44e"/><path d="M0 0 L-10.39 -6.00 A12 12 0 0 0 4.10 11.28 Z" fill="#2a9d48"/><path d="M0 0 L10.39 -6.00 A12 12 0 0 1 3.11 11.59 Z" fill="#fcc934"/><path d="M0 0 L-10.39 -6.00 A12 12 0 0 1 10.39 -6.00 L4.78 -2.76 Z" fill="#e33e2b"/><circle r="6.00" fill="#fff"/><circle r="4.68" fill="#3b7de9"/></g><circle cx="19.8" cy="19.7" r="7.3" fill="#8795a3"/><text x="19.8" y="22.7" font-size="8.5" font-weight="700" fill="#eef1f4" text-anchor="middle" font-family="Liberation Sans, sans-serif">S</text></svg>
<svg style="position:absolute;left:645.8px;top:960.6px;" width="22" height="22" viewBox="0 0 22 22"><circle cx="11" cy="11" r="10.9" fill="#fff"/><g stroke-linecap="round" stroke-width="2.5" fill="none"><path d="M9.1 4.6 V9" stroke="#36c5f0"/><path d="M4.6 9.1 H5.2" stroke="#36c5f0"/><path d="M4.7 9 H9" stroke="#36c5f0" stroke-width="2.3"/><path d="M12.9 4.7 V9" stroke="#2eb67d"/><path d="M13 9 H13.1 M17.2 9 H17.3" stroke="#2eb67d"/><path d="M12.9 13 H17.3" stroke="#ecb22e"/><path d="M12.9 13 V13.1 M12.9 17.2 V17.3" stroke="#ecb22e"/><path d="M9.1 13 V17.3" stroke="#e01e5a"/><path d="M4.7 13 H4.8 M9 13 H9.1" stroke="#e01e5a"/></g></svg>
<svg style="position:absolute;left:693.1px;top:958.6px;" width="28" height="28" viewBox="0 0 28 28"><g transform="translate(13,13)"><circle r="12" fill="#e33e2b"/><path d="M0 0 L-10.39 6.00 A12 12 0 0 0 0.00 12.00 Z" fill="#2da44e"/><path d="M0 0 L-10.39 6.00 A12 12 0 0 0 0.00 12.00 Z" fill="#2da44e"/><path d="M0 0 L-10.39 -6.00 A12 12 0 0 0 4.10 11.28 Z" fill="#2a9d48"/><path d="M0 0 L10.39 -6.00 A12 12 0 0 1 3.11 11.59 Z" fill="#fcc934"/><path d="M0 0 L-10.39 -6.00 A12 12 0 0 1 10.39 -6.00 L4.78 -2.76 Z" fill="#e33e2b"/><circle r="6.00" fill="#fff"/><circle r="4.68" fill="#3b7de9"/></g><circle cx="19.8" cy="19.7" r="7.4" fill="#f3dca3"/><circle cx="19.8" cy="19.7" r="5.6" fill="none" stroke="#ad832e" stroke-width="1"/><circle cx="19.8" cy="18.099999999999998" r="1.8" fill="none" stroke="#ad832e" stroke-width="1"/><path d="M16.400000000000002 23.7 Q19.8 19.099999999999998 23.2 23.7" fill="none" stroke="#ad832e" stroke-width="1"/></svg>
<svg style="position:absolute;left:741.9px;top:958.6px;" width="28" height="28" viewBox="0 0 28 28"><g transform="translate(13,13)"><circle r="12" fill="#e33e2b"/><path d="M0 0 L-10.39 6.00 A12 12 0 0 0 0.00 12.00 Z" fill="#2da44e"/><path d="M0 0 L-10.39 6.00 A12 12 0 0 0 0.00 12.00 Z" fill="#2da44e"/><path d="M0 0 L-10.39 -6.00 A12 12 0 0 0 4.10 11.28 Z" fill="#2a9d48"/><path d="M0 0 L10.39 -6.00 A12 12 0 0 1 3.11 11.59 Z" fill="#fcc934"/><path d="M0 0 L-10.39 -6.00 A12 12 0 0 1 10.39 -6.00 L4.78 -2.76 Z" fill="#e33e2b"/><circle r="6.00" fill="#fff"/><circle r="4.68" fill="#3b7de9"/></g><circle cx="19.8" cy="19.7" r="7.4" fill="#c3ebe0"/><circle cx="19.8" cy="19.7" r="5.6" fill="none" stroke="#4c9a8c" stroke-width="1"/><circle cx="19.8" cy="18.099999999999998" r="1.8" fill="none" stroke="#4c9a8c" stroke-width="1"/><path d="M16.400000000000002 23.7 Q19.8 19.099999999999998 23.2 23.7" fill="none" stroke="#4c9a8c" stroke-width="1"/></svg>
<svg style="position:absolute;left:790.8px;top:958.6px;" width="28" height="28" viewBox="0 0 28 28"><g transform="translate(13,13)"><circle r="12" fill="#e33e2b"/><path d="M0 0 L-10.39 6.00 A12 12 0 0 0 0.00 12.00 Z" fill="#2da44e"/><path d="M0 0 L-10.39 6.00 A12 12 0 0 0 0.00 12.00 Z" fill="#2da44e"/><path d="M0 0 L-10.39 -6.00 A12 12 0 0 0 4.10 11.28 Z" fill="#2a9d48"/><path d="M0 0 L10.39 -6.00 A12 12 0 0 1 3.11 11.59 Z" fill="#fcc934"/><path d="M0 0 L-10.39 -6.00 A12 12 0 0 1 10.39 -6.00 L4.78 -2.76 Z" fill="#e33e2b"/><circle r="6.00" fill="#fff"/><circle r="4.68" fill="#3b7de9"/></g><circle cx="19.8" cy="19.7" r="7.4" fill="#2a1416"/><path d="M14.8 22.7 L23.8 15.7" stroke="#d8323a" stroke-width="2.6"/><path d="M17.8 24.7 L25.8 18.7" stroke="#8a1c22" stroke-width="2"/><path d="M18.8 20.7 L22.8 17.7" stroke="#58b368" stroke-width="1.4"/><path d="M15.8 18.7 L19.8 15.7" stroke="#f2f2f2" stroke-width="0.8"/></svg>
<div style="position:absolute;left:588.1px;top:989.8px;width:39.799999999999955px;height:2.2px;background:#96ebd0;"></div>
<div style="position:absolute;left:637px;top:989.8px;width:39.799999999999955px;height:2.2px;background:#96ebd0;"></div>
<div style="position:absolute;left:686.1px;top:989.8px;width:39.799999999999955px;height:2.2px;background:#96ebd0;"></div>
<div style="position:absolute;left:731px;top:989.8px;width:48px;height:2.2px;background:#96ebd0;"></div>
<div style="position:absolute;left:783.9px;top:989.8px;width:39.89999999999998px;height:2.2px;background:#96ebd0;"></div>
<svg style="position:absolute;left:1706px;top:967px;" width="14" height="9" viewBox="0 0 14 9"><path d="M1 7.6 L7 1.6 L13 7.6" fill="none" stroke="#fff" stroke-width="1.3"/></svg>
<svg style="position:absolute;left:1728.5px;top:965.5px;" width="17" height="14" viewBox="0 0 17 14"><rect x="4.2" y="0.6" width="12.2" height="8.6" fill="none" stroke="#fff" stroke-width="1.1"/><rect x="0.6" y="1.4" width="3.2" height="3" fill="#1e1c1e" stroke="#fff" stroke-width="0.9"/><path d="M2.2 4.4 V12.6 H12.6 M8.4 9.2 V12.6" fill="none" stroke="#fff" stroke-width="1.1"/></svg>
<span style="position:absolute;left:1757.90px;top:953.02px;line-height:20px;font-size:12px;font-weight:400;color:#fff;white-space:pre;transform:scaleX(0.9129);transform-origin:0 50%;">10:37 PM</span>
<span style="position:absolute;left:1753.00px;top:971.00px;line-height:20px;font-size:12px;font-weight:400;color:#fff;white-space:pre;transform:scaleX(0.9440);transform-origin:0 50%;">10/30/2025</span>
<svg style="position:absolute;left:1824.5px;top:964px;" width="26" height="26" viewBox="0 0 26 26"><path d="M0.6 0.4 H16.6 V11.4 H9.6 L6.2 14.8 V11.4 H0.6Z" fill="#fff"/><path d="M3 3.4 H14.2 M3 5.9 H14.2 M3 8.4 H14.2" stroke="#1e1c1e" stroke-width="0.9"/><circle cx="16" cy="15.4" r="7.6" fill="#1e1c1e" stroke="#7a7a7a" stroke-width="1"/><text x="16" y="19.2" font-size="10.5" fill="#fff" text-anchor="middle" font-family="Liberation Sans, sans-serif">4</text></svg>
</div>
</body></html>
